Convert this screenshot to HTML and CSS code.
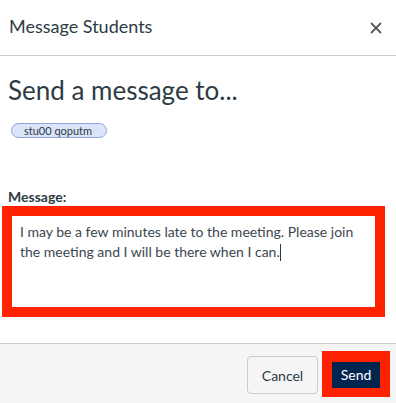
FILE: index.html
```html
<!DOCTYPE html>
<html>
<head>
<meta charset="utf-8">
<link rel="stylesheet" href="styles.css">
</head>
<body>
<div class="dialog">
  <div class="header">
    <span class="title">Message Students</span>
    <svg class="close" width="12" height="12" viewBox="0 0 12 12"><path d="M1.5 1.5 L10.5 10.5 M10.5 1.5 L1.5 10.5" stroke="#5a5a5a" stroke-width="1.8" stroke-linecap="round"/></svg>
  </div>
  <div class="content">
    <h2 class="heading">Send a message to...</h2>
    <div class="pills"><span class="pill">stu00 qoputm</span></div>
    <div class="label">Message:</div>
    <div class="highlight">
      <div class="textarea">I may be a few minutes late to the meeting. Please join the meeting and I will be there when I can.<span class="caret"></span></div>
    </div>
  </div>
  <div class="footer">
    <button class="btn cancel">Cancel</button>
    <div class="send-wrap"><button class="btn send">Send</button></div>
  </div>
</div>
</body>
</html>
```
FILE: styles.css
```css
html, body {
  margin: 0;
  padding: 0;
  background: #ffffff;
}
body {
  font-family: Lato, "Open Sans", sans-serif;
  color: #2d3b45;
}
.dialog {
  width: 396px;
  height: 403px;
  display: flex;
  flex-direction: column;
}
.header {
  height: 41px;
  padding: 14px 14px 0 9px;
  border-bottom: 1px solid #c7cdd1;
  display: flex;
  justify-content: space-between;
  align-items: flex-start;
}
.title {
  font-size: 18px;
  line-height: 24px;
}
.close {
  margin-top: 8px;
}
.content {
  flex: 1;
}
.heading {
  margin: 19px 0 0 8px;
  font-size: 26px;
  font-weight: 400;
  line-height: 31px;
}
.pills {
  margin: 17px 0 0 11px;
  display: flex;
}
.pill {
  font-size: 11px;
  line-height: 13px;
  padding: 0 14px 0 12px;
  background: #dbe4f8;
  border: 1px solid #8ea5e0;
  border-radius: 8px;
}
.label {
  margin: 50px 0 0 8px;
  font-size: 14px;
  font-weight: 700;
  line-height: 17px;
}
.highlight {
  margin: 1px 0 0 2px;
  width: 363px;
  border: 10px solid #ff2200;
}
.textarea {
  height: 85px;
  padding: 6px 8px 0 8px;
  background: #ffffff;
  font-size: 14px;
  line-height: 20px;
  color: #3a4650;
}
.caret {
  display: inline-block;
  width: 1px;
  height: 17px;
  background: #2d3b45;
  vertical-align: -4px;
}
.footer {
  height: 59px;
  border-top: 1px solid #c7cdd1;
  background: #f5f5f5;
  display: flex;
  justify-content: flex-end;
  align-items: center;
  padding-right: 6px;
  gap: 4px;
}
.btn {
  font-family: Lato, "Open Sans", sans-serif;
  font-size: 14px;
  margin: 0;
}
.cancel {
  width: 71px;
  height: 38px;
  background: #f5f5f5;
  border: 1px solid #c7cdd1;
  border-radius: 4px;
  color: #2d3b45;
  margin-top: 3px;
}
.send-wrap {
  border-style: solid;
  border-color: #ff2200;
  border-width: 11px 10px 9px 10px;
  display: flex;
}
.send {
  width: 48px;
  height: 26px;
  background: #022550;
  color: #ffffff;
  border: none;
  padding: 0;
}
```
